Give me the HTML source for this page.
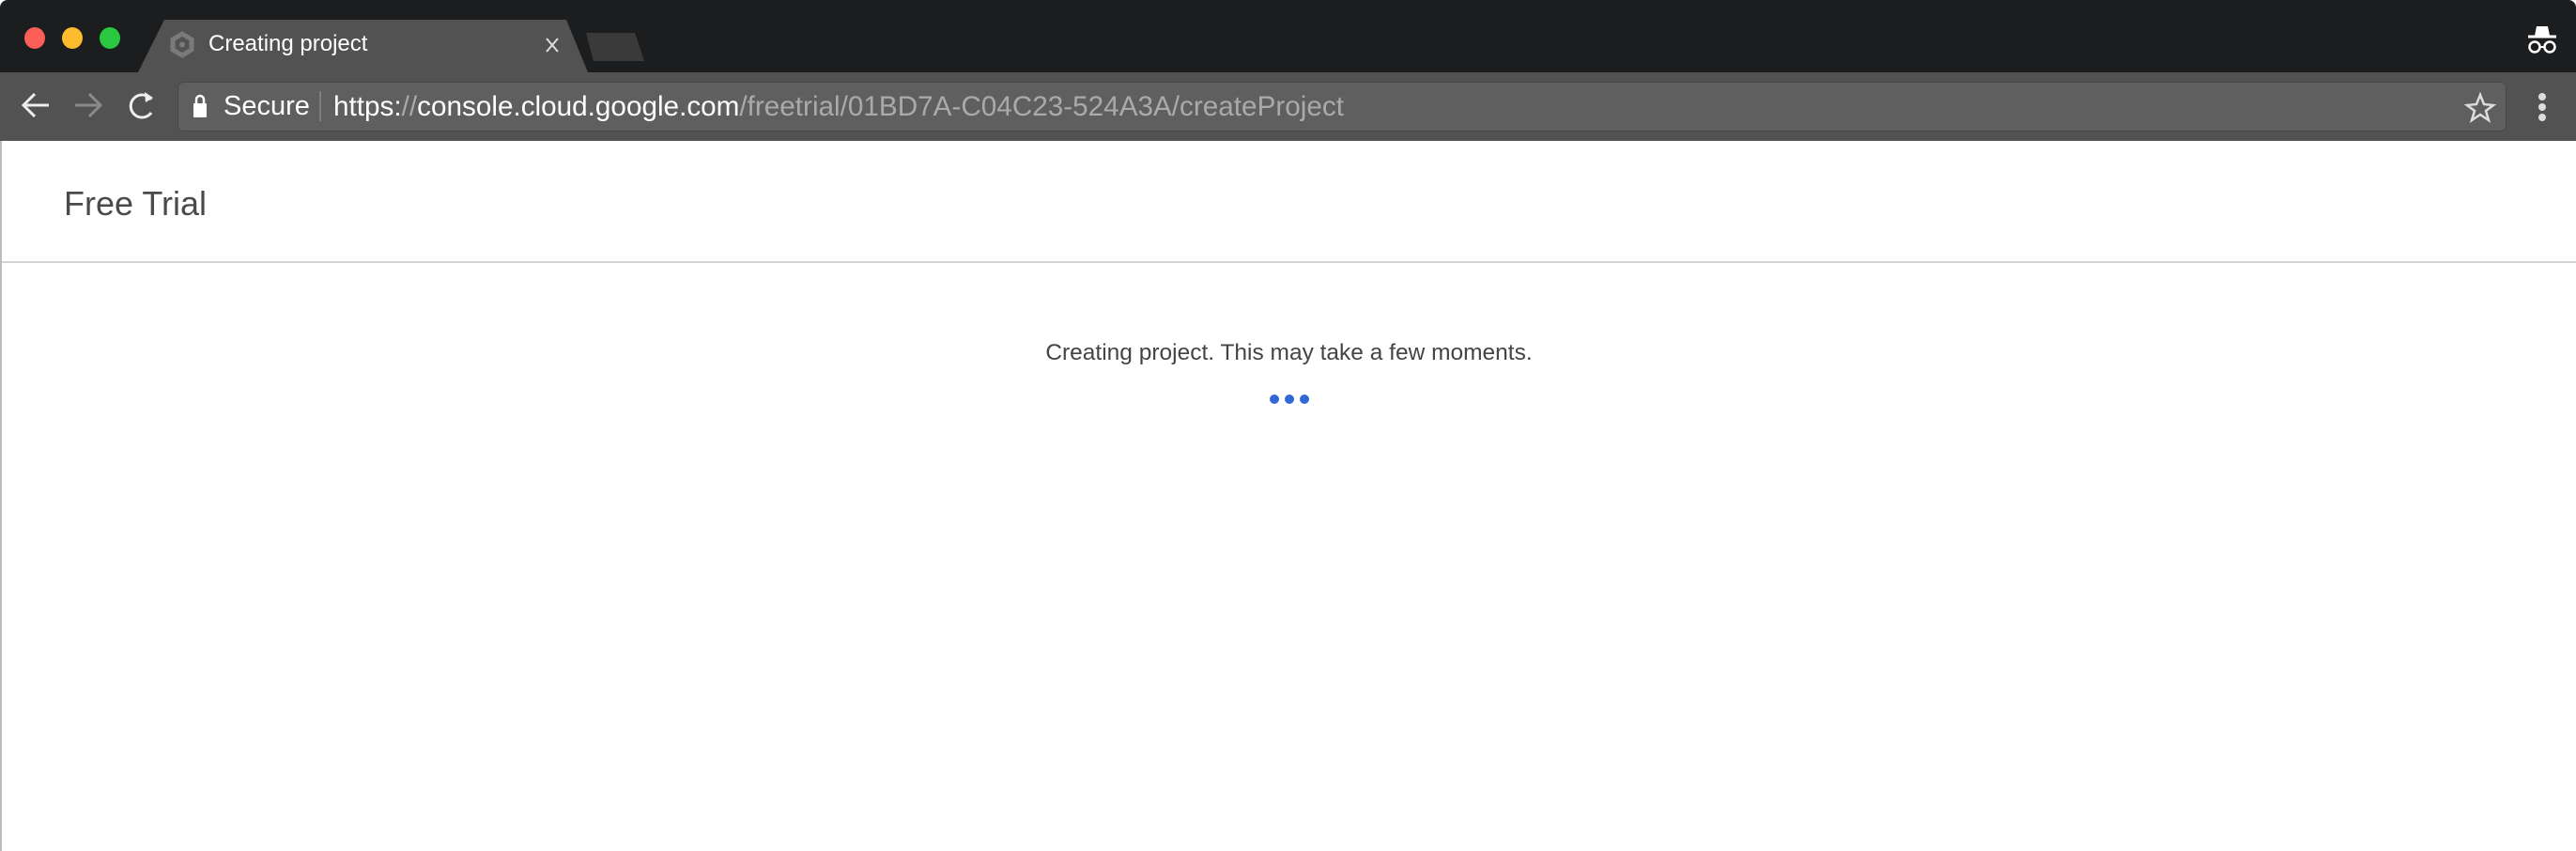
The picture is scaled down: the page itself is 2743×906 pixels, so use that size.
<!DOCTYPE html>
<html><head><style>
html,body{margin:0;padding:0;width:2743px;height:906px;overflow:hidden;background:#fff;font-family:"Liberation Sans",sans-serif}
.top{position:absolute;left:0;top:0;width:2743px;height:77px;background:#1c1d1f;border-radius:8px 8px 0 0}
.tool{position:absolute;left:0;top:77px;width:2743px;height:73px;background:#525252}
.dot{position:absolute;top:29px;width:22px;height:23px;border-radius:50%}
.omni{position:absolute;left:189px;top:87px;width:2480px;height:53px;background:#5f5f5f;border-radius:6px;border:1px solid #474747;box-sizing:border-box}
.content{position:absolute;left:0;top:150px;width:2743px;height:756px;border-left:2px solid #bbb;box-sizing:border-box}
</style></head><body>
<div class="top"></div>
<div class="tool"></div>
<div class="omni"></div>
<div class="dot" style="left:26px;background:#fc5f57"></div>
<div class="dot" style="left:66px;background:#fdbb2e"></div>
<div class="dot" style="left:106px;background:#2ac840"></div>
<svg style="position:absolute;left:0;top:0" width="2743" height="150">
<path d="M147 77 L175 21 L603 21 L626 77 Z" fill="#525252"/>
<path d="M624 35 L676 35 L686 65 L632 65 Z" fill="#3a3a3a"/>
<path d="M194 36 L204 42 L204 53 L194 59 L184 53 L184 42 Z" fill="none" stroke="#7a7a7a" stroke-width="5"/>
<circle cx="194" cy="47.5" r="3" fill="#7a7a7a"/>
<path d="M582 41 L594 55 M594 41 L582 55" stroke="#ddd" stroke-width="2"/>
<path d="M52 112 H25 M37 100 L25 112 L37 124" stroke="#eee" stroke-width="3" fill="none"/>
<path d="M80 112 H107 M95 100 L107 112 L95 124" stroke="#8a8a8a" stroke-width="3" fill="none"/>
<path d="M161 106 A12 12 0 1 0 161 120" stroke="#eee" stroke-width="3" fill="none"/>
<path d="M154 98 L163 104 L155 109 Z" fill="#eee"/>
<rect x="206" y="110" width="14" height="15" rx="1" fill="#fff"/>
<path d="M209 110 v-4 a4 4 0 0 1 8 0 v4" stroke="#fff" stroke-width="2.5" fill="none"/>
<line x1="341" y1="97" x2="341" y2="129" stroke="#888" stroke-width="1.5"/>
<path d="M2641 101 L2645 111 L2655 112 L2647 118 L2650 128 L2641 122 L2632 128 L2635 118 L2627 112 L2637 111 Z" stroke="#ddd" stroke-width="2.5" fill="none"/>
<circle cx="2707" cy="103" r="4" fill="#ddd"/><circle cx="2707" cy="114" r="4" fill="#ddd"/><circle cx="2707" cy="125" r="4" fill="#ddd"/>
<path d="M2692 39 h30" stroke="#fff" stroke-width="3"/>
<path d="M2699 38 l2 -10 h12 l2 10 Z" fill="#fff"/>
<circle cx="2699" cy="50" r="5.5" stroke="#fff" stroke-width="2.5" fill="none"/>
<circle cx="2715" cy="50" r="5.5" stroke="#fff" stroke-width="2.5" fill="none"/>
<path d="M2704 50 h6" stroke="#fff" stroke-width="2"/>
</svg>
<div style="position:absolute;left:222px;top:33px;color:#fff;font-size:24px">Creating project</div>
<div style="position:absolute;left:238px;top:97px;font-size:29px;color:#fff">Secure</div>
<div style="position:absolute;left:355px;top:97px;font-size:29.7px;color:#fff;white-space:nowrap">https:<span style="color:#aaa">//</span>console.cloud.google.com<span style="color:#aaa">/freetrial/01BD7A-C04C23-524A3A/createProject</span></div>
<div class="content">
<div style="position:absolute;left:66px;top:46px;font-size:36px;color:#4a4a4a">Free Trial</div>
<div style="position:absolute;left:0;top:128px;width:2743px;height:2px;background:#d3d3d3"></div>
<div style="position:absolute;left:0;width:2741px;top:212px;text-align:center;font-size:24.5px;color:#444">Creating project. This may take a few moments.</div>
<div style="position:absolute;left:1350px;top:270px;width:10px;height:10px;border-radius:50%;background:#3367d6"></div>
<div style="position:absolute;left:1366px;top:270px;width:10px;height:10px;border-radius:50%;background:#3367d6"></div>
<div style="position:absolute;left:1382px;top:270px;width:10px;height:10px;border-radius:50%;background:#3367d6"></div>
</div>
</body></html>
